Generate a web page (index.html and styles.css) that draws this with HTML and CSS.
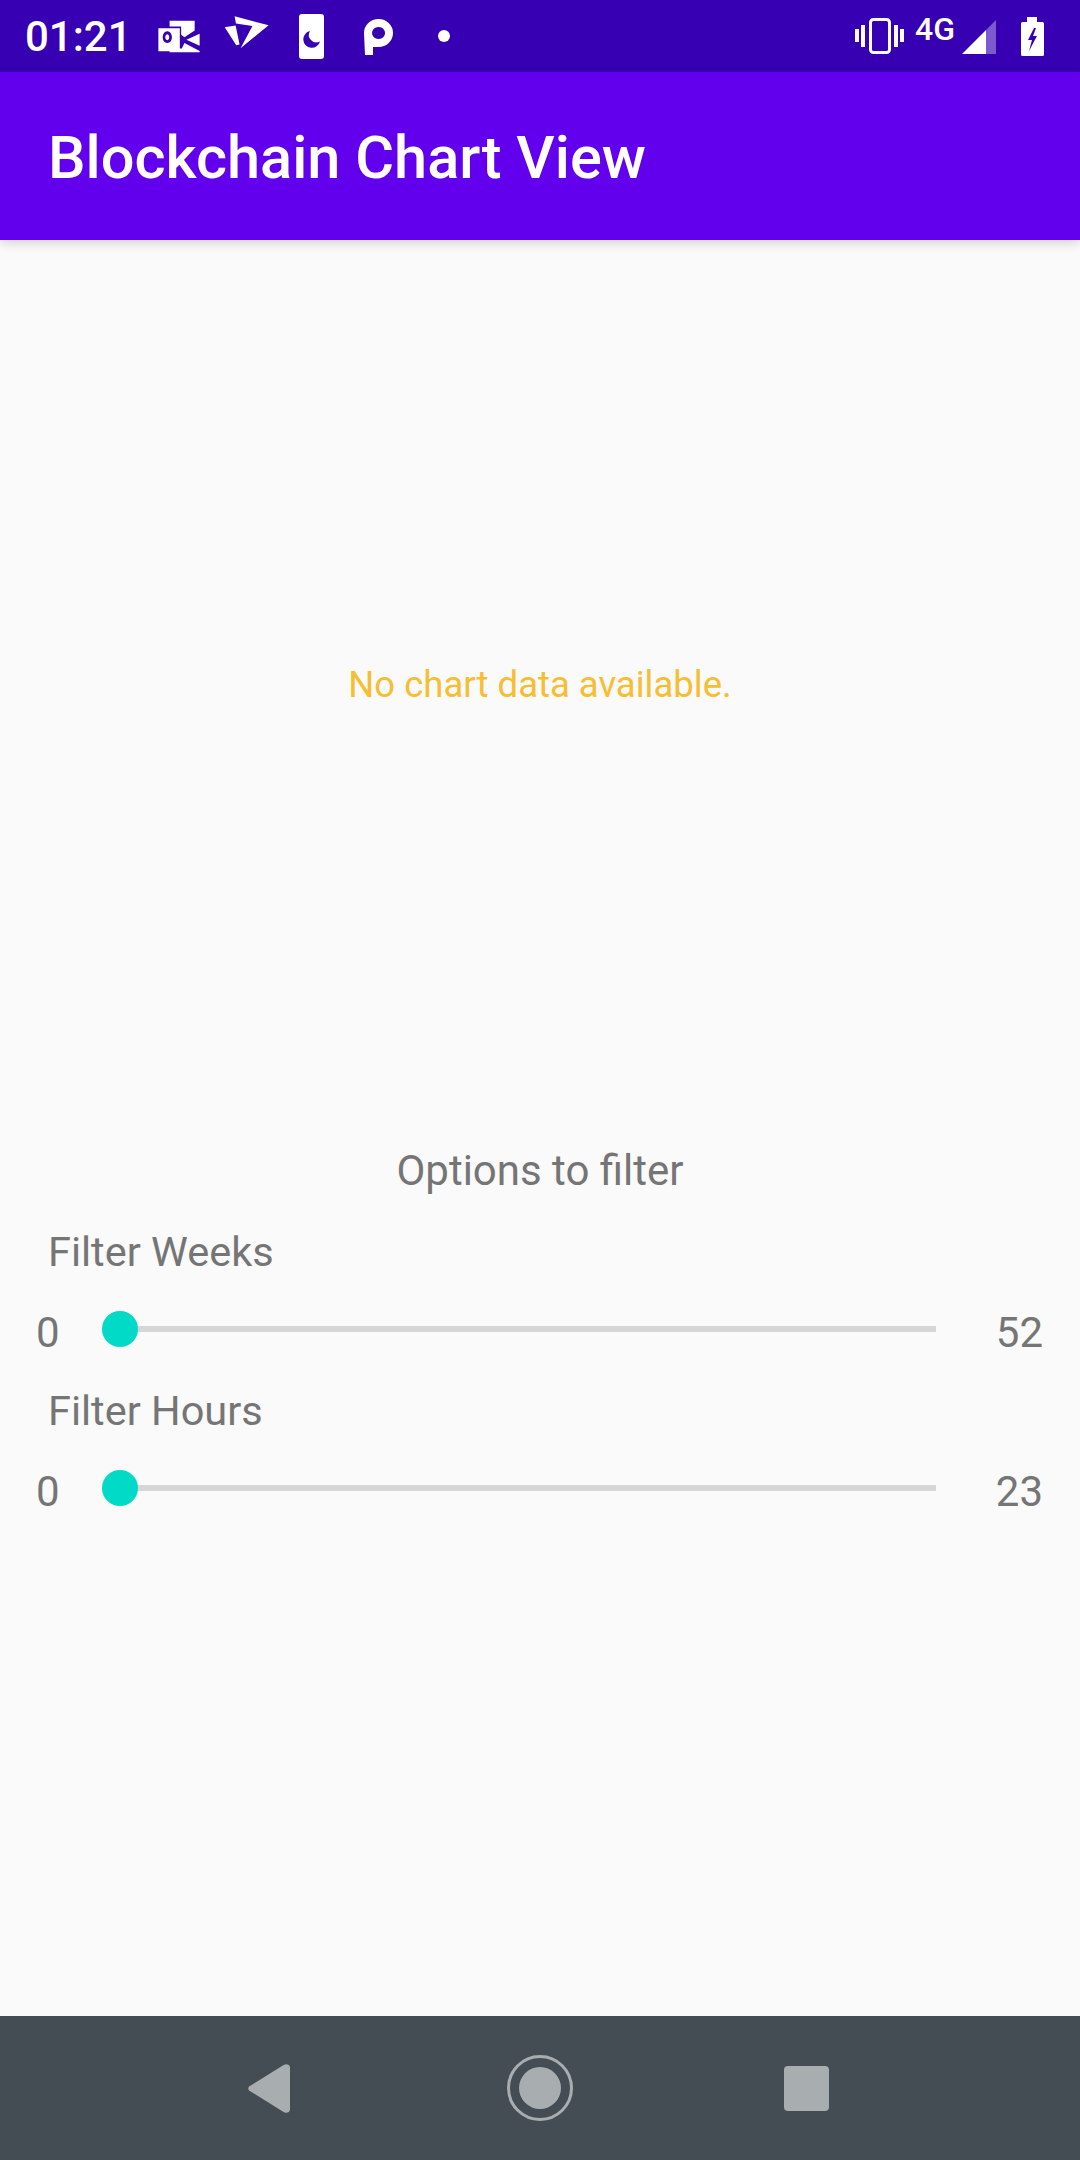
FILE: index.html
```html
<!DOCTYPE html>
<html lang="en">
  <head>
    <meta charset="UTF-8" />
    <title>Blockchain Chart View</title>
    <link rel="stylesheet" href="styles.css">
  </head>
  <body>
    <div class="screen">
      <div class="status-bar">
        <span class="clock">01:21</span>
        <svg class="ic-outlook" viewBox="25 40 125 100" width="42" height="33">
          <path fill="#fff" fill-rule="evenodd" d="M25 65H90V135H25ZM52 74a14 18 0 1 0 .1 0ZM52 83a6 9 0 1 1-.1 0Z"/>
          <path fill="#fff" d="M59 42H135V72L104 92 94 85V60H59ZM110 100 150 82V118ZM59 126V138H150V134L104 110 96 126Z"/>
        </svg>
        <svg class="ic-vivid" viewBox="215 24 136 100" width="45" height="33">
          <path fill="#fff" d="M217 58 250 53 262 110 252 113ZM247 25 350 52 265 122 301 54 251 47Z"/>
        </svg>
        <svg class="ic-phone" viewBox="0 0 25 45" width="25" height="45">
          <rect width="25" height="45" rx="3" fill="#fff"/>
          <path fill="#3700b3" d="M11 17a8.500 8.500 0 1 0 10 10.500 7.500 7.500 0 0 1-10-10.500Z"/>
        </svg>
        <svg class="ic-park" viewBox="0 0 29 36" width="29" height="36">
          <path fill="#fff" fill-rule="evenodd" d="M0 14a14.500 14 0 1 1 14 14H9V36H1ZM14.500 8a6.500 6 0 1 0 .1 0Z"/>
        </svg>
        <span class="dot"></span>
        <span class="status-spacer"></span>
        <svg class="ic-vibrate" viewBox="0 0 49 36" width="49" height="36">
          <rect x="15.500" y="1.500" width="19" height="33" rx="3" fill="none" stroke="#fff" stroke-width="3"/>
          <path fill="#fff" d="M0 11h4v13H0ZM6 7h4v22H6ZM39 7h4v22h-4ZM45 11h4v13h-4Z"/>
        </svg>
        <span class="net">4G</span>
        <svg class="ic-signal" viewBox="0 0 34 34" width="34" height="34">
          <path fill="#fff" d="M0 34 24 10V34Z"/>
          <path fill="#fff" opacity=".35" d="M24 10 34 0V34H24Z"/>
        </svg>
        <svg class="ic-battery" viewBox="0 0 23 39" width="23" height="39">
          <path fill="#fff" d="M6 0H16V5H21.500Q23 5 23 6.500V37.500Q23 39 21.500 39H1.500Q0 39 0 37.500V6.500Q0 5 1.500 5H6Z"/>
          <path fill="#3700b3" d="M13 11 7 23H11L8 34 16 19H12L15 11Z"/>
        </svg>
      </div>

      <header class="app-bar">
        <h1 class="app-title">Blockchain Chart View</h1>
      </header>

      <main class="content">
        <div class="chart">No chart data available.</div>
        <div class="options-title">Options to filter</div>

        <div class="filter-label">Filter Weeks</div>
        <div class="filter-row">
          <span class="min">0</span>
          <div class="slider"><span class="thumb"></span></div>
          <span class="max">52</span>
        </div>

        <div class="filter-label">Filter Hours</div>
        <div class="filter-row">
          <span class="min">0</span>
          <div class="slider"><span class="thumb"></span></div>
          <span class="max">23</span>
        </div>
      </main>

      <nav class="nav-bar">
        <svg class="nav-back" viewBox="0 0 42 49" width="42" height="49">
          <path fill="#a8adb0" d="M1 26.500Q-.500 24.500 1 22.500L36 .8Q41 -1 42 3V46Q41 50 36 48.200Z"/>
        </svg>
        <svg class="nav-home" viewBox="0 0 66 66" width="66" height="66">
          <circle cx="33" cy="33" r="31.500" fill="none" stroke="#a8adb0" stroke-width="3"/>
          <circle cx="33" cy="33" r="21" fill="#a8adb0"/>
        </svg>
        <span class="nav-recent"></span>
      </nav>
    </div>
  </body>
</html>
```

FILE: styles.css
```css
body {
  margin: 0;
  background-color: #fafafa;
  font-family: Roboto, sans-serif;
}
.screen {
  width: 1080px;
  height: 2160px;
  display: flex;
  flex-direction: column;
  overflow: hidden;
}

/* status bar */
.status-bar {
  height: 72px;
  flex: none;
  box-sizing: border-box;
  padding: 0 36px 0 25px;
  display: flex;
  align-items: center;
  background-color: #3700b3;
  color: #fff;
}
.clock {
  font-size: 42px;
  font-weight: 500;
  width: 133px;
}
.ic-vivid { margin: -8px 0 0 24px; }
.ic-phone { margin: 0 0 0 30px; }
.ic-park { margin: 1px 0 0 40px; }
.dot {
  width: 12px;
  height: 12px;
  margin-left: 45px;
  border-radius: 50%;
  background-color: #fff;
}
.status-spacer { flex: 1; }
.net {
  font-size: 32px;
  font-weight: 500;
  margin: -14px 0 0 11px;
  width: 47px;
}
.ic-signal { margin: 2px 0 0 0; }
.ic-battery { margin: 0 0 0 25px; }

/* app bar */
.app-bar {
  height: 168px;
  flex: none;
  box-sizing: border-box;
  padding-left: 48px;
  display: flex;
  align-items: center;
  background-color: #6200ee;
  box-shadow: 0 3px 10px rgba(0, 0, 0, 0.16);
  position: relative;
}
.app-title {
  margin: 4px 0 0;
  color: #fff;
  font-size: 59.5px;
  font-weight: 500;
}

/* page */
.content {
  flex: 1;
  color: #757575;
  font-size: 41.500px;
}
.chart {
  height: 888px;
  display: flex;
  align-items: center;
  justify-content: center;
  color: #f7bd33;
  font-size: 36.5px;
}
.options-title {
  height: 91px;
  line-height: 85px;
  font-size: 42px;
  text-align: center;
}
.filter-label {
  padding-left: 48px;
  height: 46px;
  line-height: 46px;
  margin-top: 10px;
}
.filter-row {
  height: 103px;
  display: flex;
  align-items: center;
  padding-top: 11px;
  box-sizing: border-box;
  font-size: 42px;
}
.min {
  width: 120px;
  padding-left: 36px;
  box-sizing: border-box;
  flex: none;
}
.slider {
  width: 816px;
  height: 6px;
  flex: none;
  margin-top: -7px;
  background-color: #d6d6d6;
  position: relative;
}
.thumb {
  position: absolute;
  left: -18px;
  top: -15px;
  width: 36px;
  height: 36px;
  border-radius: 50%;
  background-color: #00dac6;
}
.max {
  flex: 1;
  text-align: right;
  padding-right: 37px;
}

/* nav bar */
.nav-bar {
  height: 144px;
  flex: none;
  background-color: #454d54;
  display: flex;
  align-items: center;
  box-sizing: border-box;
  padding: 0 0 0 248px;
}
.nav-home { margin-left: 217px; }
.nav-recent {
  width: 45px;
  height: 45px;
  margin-left: 211px;
  border-radius: 4px;
  background-color: #a8adb0;
}
```
